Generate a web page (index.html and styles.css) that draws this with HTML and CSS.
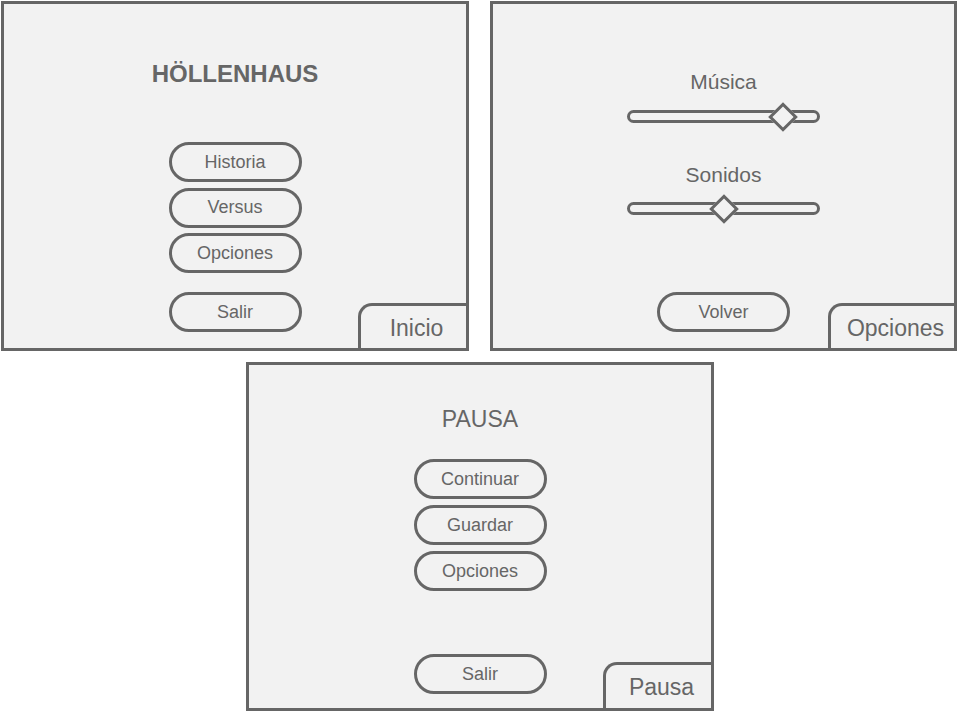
FILE: index.html
```html
<!DOCTYPE html>
<html lang="es">
<head>
<meta charset="utf-8">
<title>Höllenhaus - pantallas</title>
<link rel="stylesheet" href="styles.css">
</head>
<body>
<div class="page">
  <div class="row row-top">
    <section class="screen screen-inicio">
      <h1 class="title title-bold">HÖLLENHAUS</h1>
      <div class="menu">
        <div class="btn">Historia</div>
        <div class="btn">Versus</div>
        <div class="btn">Opciones</div>
      </div>
      <div class="btn btn-bottom">Salir</div>
      <div class="tab tab-short">Inicio</div>
    </section>
    <section class="screen screen-opciones">
      <div class="label">Música</div>
      <div class="track track-first"><span class="thumb" style="left: 82%"></span></div>
      <div class="label label-second">Sonidos</div>
      <div class="track track-second"><span class="thumb" style="left: 50.5%"></span></div>
      <div class="btn btn-bottom">Volver</div>
      <div class="tab tab-long">Opciones</div>
    </section>
  </div>
  <div class="row row-bottom">
    <section class="screen screen-pausa">
      <h2 class="title title-regular">PAUSA</h2>
      <div class="menu menu-pausa">
        <div class="btn">Continuar</div>
        <div class="btn">Guardar</div>
        <div class="btn">Opciones</div>
      </div>
      <div class="btn btn-bottom">Salir</div>
      <div class="tab tab-short tab-pausa">Pausa</div>
    </section>
  </div>
</div>
</body>
</html>
```

FILE: styles.css
```css
* { box-sizing: border-box; }

body {
  margin: 0;
  background: #ffffff;
  font-family: "Liberation Sans", Arial, sans-serif;
  color: #666666;
}

.page {
  width: 960px;
  padding-top: 1px;
  display: flex;
  flex-direction: column;
  gap: 11px;
}

.row {
  display: flex;
}

.row-top {
  padding-left: 1px;
  gap: 21px;
}

.row-bottom {
  justify-content: center;
}

.screen {
  position: relative;
  width: 468px;
  height: 350px;
  border: 3px solid #666666;
  background: #f2f2f2;
  display: flex;
  flex-direction: column;
  align-items: center;
  padding-bottom: 16px;
}

.screen-inicio { padding-top: 56px; }

.screen-opciones {
  width: 467px;
  padding-top: 66px;
}

.screen-pausa {
  height: 349px;
  padding-top: 40.5px;
  padding-bottom: 14px;
}

.title {
  margin: 0;
  color: #666666;
}

.title-bold {
  font-size: 24px;
  line-height: 28px;
  font-weight: bold;
}

.title-regular {
  font-size: 23px;
  line-height: 26px;
  font-weight: normal;
}

.menu {
  margin-top: 54px;
  display: flex;
  flex-direction: column;
  gap: 5.5px;
}

.menu-pausa {
  margin-top: 27.5px;
  gap: 6px;
}

.btn {
  width: 133px;
  height: 40px;
  border: 3px solid #666666;
  border-radius: 20px;
  display: flex;
  align-items: center;
  justify-content: center;
  font-size: 18px;
}

.btn-bottom {
  margin-top: auto;
}

.label {
  font-size: 21px;
  line-height: 24px;
}

.label-second { margin-top: 40px; }

.track {
  position: relative;
  width: 193px;
  height: 13px;
  border: 3px solid #666666;
  border-radius: 7px;
}

.track-first { margin-top: 16px; }
.track-second { margin-top: 15px; }

.thumb {
  position: absolute;
  top: 50%;
  width: 21px;
  height: 21px;
  border: 3px solid #666666;
  background: #f2f2f2;
  transform: translate(-50%, -50%) rotate(45deg);
}

.tab {
  position: absolute;
  right: 0;
  bottom: 0;
  height: 45px;
  border-top: 3px solid #666666;
  border-left: 3px solid #666666;
  border-top-left-radius: 14px;
  padding-top: 10.5px;
  padding-left: 6px;
  text-align: center;
  font-size: 23px;
  line-height: 23px;
}

.tab-short { width: 108px; }
.tab-long { width: 126px; }
.tab-pausa { height: 46px; }
```
